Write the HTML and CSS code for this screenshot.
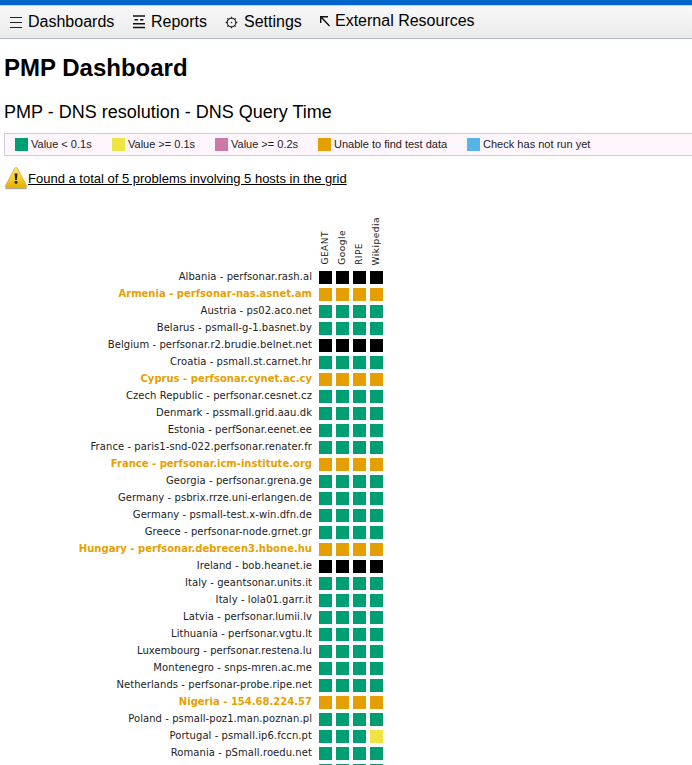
FILE: index.html
```html
<!DOCTYPE html>
<html lang="en">
<head>
<meta charset="utf-8">
<title>PMP Dashboard</title>
<link rel="stylesheet" href="styles.css">
</head>
<body>
<nav class="menu">
  <a class="item dashboards"><svg width="14" height="15" viewBox="0 0 14 15"><path d="M1 3.500h12M1 8.500h12M1 13.500h12" stroke="#222" fill="none"/></svg><span>Dashboards</span></a>
  <a class="item reports"><svg width="14" height="15" viewBox="0 0 14 15"><path d="M1 2h12M1 9.800h12M1 13.500h12" stroke="#111" stroke-width="1.400" fill="none"/><path d="M2.500 5.800h3.500M8 5.800h3.500" stroke="#111" stroke-width="1.400"/></svg><span>Reports</span></a>
  <a class="item settings"><svg width="14" height="15" viewBox="0 0 14 15"><circle cx="6.500" cy="8.500" r="4.300" stroke="#222" stroke-width="1.100" fill="none"/><circle cx="6.500" cy="8.500" r=".8" fill="#222"/><path d="M6.500 2.700v1.500M6.500 12.800v1.500M.7 8.500h1.500M10.800 8.500h1.500M2.400 4.400l1.100 1.100M9.500 11.500l1.100 1.100M2.400 12.600l1.100-1.100M9.500 5.500l1.100-1.100" stroke="#222" stroke-width="1.300" fill="none"/></svg><span>Settings</span></a>
  <a class="item external"><svg width="14" height="15" viewBox="0 0 14 15"><path d="M1.700 10V3.700H9M2 4l8.500 9" stroke="#111" stroke-width="1.400" fill="none"/></svg><span>External Resources</span></a>
</nav>
<main>
  <h1><span>PMP Dashboard</span></h1>
  <h2><span>PMP - DNS resolution - DNS Query Time</span></h2>
  <div class="legend">
    <div class="key"><i class="ok"></i><span>Value &lt; 0.1s</span></div>
    <div class="key"><i class="warn"></i><span>Value &gt;= 0.1s</span></div>
    <div class="key"><i class="crit"></i><span>Value &gt;= 0.2s</span></div>
    <div class="key wide"><i class="none"></i><span>Unable to find test data</span></div>
    <div class="key last"><i class="wait"></i><span>Check has not run yet</span></div>
  </div>
  <div class="problems">
    <svg width="24" height="24" viewBox="0 0 24 24"><defs><linearGradient id="amber" x1="0" y1="0" x2="0" y2="1"><stop offset="0" stop-color="#ffe775"/><stop offset=".55" stop-color="#f8ce2b"/><stop offset="1" stop-color="#e3ad00"/></linearGradient></defs><path d="M2 22.500h20" stroke="#aaa" stroke-width="1.500" stroke-linecap="round"/><path d="M10.700 2.200Q12 .2 13.300 2.200L22.500 19.500Q23.300 21.700 21 21.800H3Q.7 21.700 1.500 19.500Z" fill="url(#amber)" stroke="#c9a83c" stroke-width=".7"/><path d="M10.500 7.500h3l-.7 6.500h-1.600Z" fill="#222"/><circle cx="12" cy="16.300" r="1.500" fill="#222"/></svg><a>Found a total of 5 problems involving 5 hosts in the grid</a>
  </div>
  <div class="grid">
    <div class="row head"><span></span><b>GEANT</b><b>Google</b><b>RIPE</b><b>Wikipedia</b></div>
    <div class="row down"><span>Albania - perfsonar.rash.al</span><i></i><i></i><i></i><i></i></div>
    <div class="row bad"><span>Armenia - perfsonar-nas.asnet.am</span><i></i><i></i><i></i><i></i></div>
    <div class="row"><span>Austria - ps02.aco.net</span><i></i><i></i><i></i><i></i></div>
    <div class="row"><span>Belarus - psmall-g-1.basnet.by</span><i></i><i></i><i></i><i></i></div>
    <div class="row down"><span>Belgium - perfsonar.r2.brudie.belnet.net</span><i></i><i></i><i></i><i></i></div>
    <div class="row"><span>Croatia - psmall.st.carnet.hr</span><i></i><i></i><i></i><i></i></div>
    <div class="row bad"><span>Cyprus - perfsonar.cynet.ac.cy</span><i></i><i></i><i></i><i></i></div>
    <div class="row"><span>Czech Republic - perfsonar.cesnet.cz</span><i></i><i></i><i></i><i></i></div>
    <div class="row"><span>Denmark - pssmall.grid.aau.dk</span><i></i><i></i><i></i><i></i></div>
    <div class="row"><span>Estonia - perfSonar.eenet.ee</span><i></i><i></i><i></i><i></i></div>
    <div class="row"><span>France - paris1-snd-022.perfsonar.renater.fr</span><i></i><i></i><i></i><i></i></div>
    <div class="row bad"><span>France - perfsonar.icm-institute.org</span><i></i><i></i><i></i><i></i></div>
    <div class="row"><span>Georgia - perfsonar.grena.ge</span><i></i><i></i><i></i><i></i></div>
    <div class="row"><span>Germany - psbrix.rrze.uni-erlangen.de</span><i></i><i></i><i></i><i></i></div>
    <div class="row"><span>Germany - psmall-test.x-win.dfn.de</span><i></i><i></i><i></i><i></i></div>
    <div class="row"><span>Greece - perfsonar-node.grnet.gr</span><i></i><i></i><i></i><i></i></div>
    <div class="row bad"><span>Hungary - perfsonar.debrecen3.hbone.hu</span><i></i><i></i><i></i><i></i></div>
    <div class="row down"><span>Ireland - bob.heanet.ie</span><i></i><i></i><i></i><i></i></div>
    <div class="row"><span>Italy - geantsonar.units.it</span><i></i><i></i><i></i><i></i></div>
    <div class="row"><span>Italy - lola01.garr.it</span><i></i><i></i><i></i><i></i></div>
    <div class="row"><span>Latvia - perfsonar.lumii.lv</span><i></i><i></i><i></i><i></i></div>
    <div class="row"><span>Lithuania - perfsonar.vgtu.lt</span><i></i><i></i><i></i><i></i></div>
    <div class="row"><span>Luxembourg - perfsonar.restena.lu</span><i></i><i></i><i></i><i></i></div>
    <div class="row"><span>Montenegro - snps-mren.ac.me</span><i></i><i></i><i></i><i></i></div>
    <div class="row"><span>Netherlands - perfsonar-probe.ripe.net</span><i></i><i></i><i></i><i></i></div>
    <div class="row bad"><span>Nigeria - 154.68.224.57</span><i></i><i></i><i></i><i></i></div>
    <div class="row"><span>Poland - psmall-poz1.man.poznan.pl</span><i></i><i></i><i></i><i></i></div>
    <div class="row"><span>Portugal - psmall.ip6.fccn.pt</span><i></i><i></i><i></i><i class="warn"></i></div>
    <div class="row"><span>Romania - pSmall.roedu.net</span><i></i><i></i><i></i><i></i></div>
    <div class="row"><span></span><i></i><i></i><i></i><i></i></div>
  </div>
</main>
</body>
</html>
```
FILE: styles.css
```css
* { box-sizing: border-box; }
html, body { height: 765px; overflow: hidden; }
body { margin: 0; background: #fff; color: #000; font-family: "Liberation Sans", Arial, sans-serif; }

.menu {
  display: flex;
  height: 39px;
  padding-left: 9px;
  border-top: 5px solid #0066cc;
  border-bottom: 1px solid #b0b5c4;
  background: linear-gradient(#c9d3e6 0, #c9d3e6 1px, #f8f8f8 1px, #ebebeb 100%);
}
.item { display: flex; height: 34px; align-items: center; font-size: 16px; white-space: nowrap; }
.item svg { flex: none; height: 15px; margin: 0 5px 1px 0; }
.dashboards { width: 123px; }
.reports { width: 93px; }
.settings { width: 94px; }
.external { height: 31px; }
.external svg { margin-right: 2px; }

main { padding-left: 4px; }
h1 { margin: 0; padding-top: 15px; height: 58px; font-size: 24px; line-height: 28px; white-space: nowrap; }
h2 { margin: 0; padding-top: 4px; height: 36px; font-size: 18px; font-weight: 400; line-height: 22px; white-space: nowrap; }

.legend {
  display: flex;
  align-items: center;
  height: 23px;
  padding-left: 10px;
  border: 1px solid #d0cbe0;
  border-right: 0;
  background: #fff5fc;
}
.key { display: flex; flex: none; align-items: center; width: 103px; color: #222; font-size: 11px; line-height: 13px; white-space: nowrap; }
.key:first-child { width: 97px; }
.key.wide { width: 149px; }
.key.last { width: auto; letter-spacing: .02px; }
.key i { flex: none; width: 13px; height: 13px; margin-right: 3px; }
.key span { margin-top: -1px; }
.ok { background: #009e73; }
.warn { background: #f0e442; }
.crit { background: #cc79a7; }
.none { background: #e69f00; }
.wait { background: #56b4e9; }

.problems { display: flex; height: 46px; padding-top: 10px; font-size: 13px; line-height: 26px; white-space: nowrap; }
.problems a { text-decoration: underline; }

.grid { padding-top: 13px; font-family: Verdana, "DejaVu Sans", sans-serif; font-size: 10px; }
.row { display: grid; grid-template-columns: 311px repeat(4, 13px); column-gap: 4px; height: 17px; color: #222; letter-spacing: .07px; }
.row span { padding-right: 3px; line-height: 12px; text-align: right; white-space: nowrap; }
.row i { height: 13px; background: #009e73; }
.down i { background: #000; }
.bad { color: #e69f00; font-weight: 700; letter-spacing: .01px; }
.bad i { background: #e69f00; }
.row .warn { background: #f0e442; }
.head { height: 56px; padding-bottom: 6px; letter-spacing: .5px; }
.head b { justify-self: start; align-self: end; writing-mode: vertical-rl; transform: rotate(180deg); font-size: 9px; font-weight: 400; line-height: 13px; white-space: nowrap; }
```
